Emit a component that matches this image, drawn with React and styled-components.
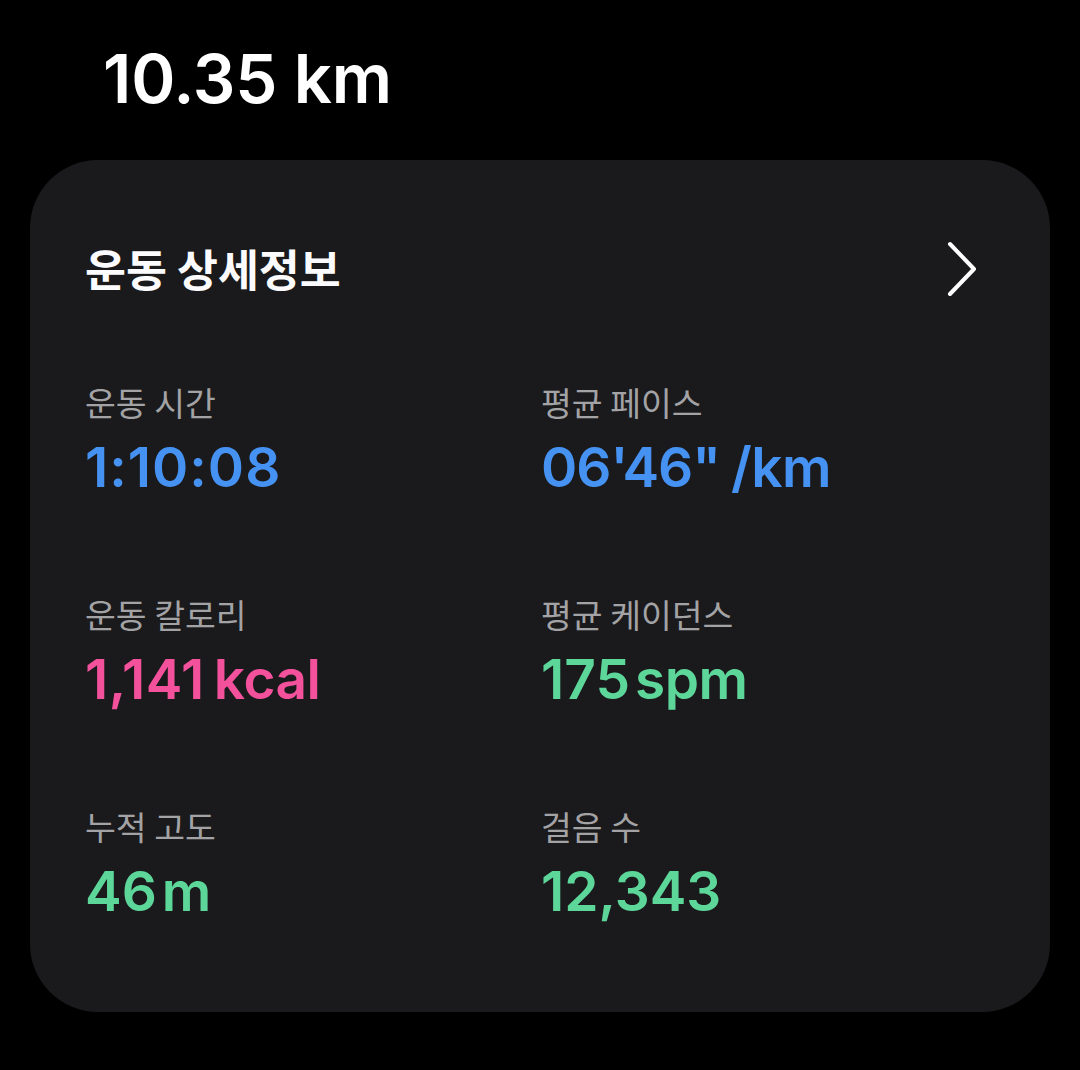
import React from "react";
import styled, { createGlobalStyle } from "styled-components";

const Global = createGlobalStyle`
  html, body { margin: 0; padding: 0; background: #000; }
  body { font-family: Inter, "Noto Sans CJK KR", sans-serif; -webkit-font-smoothing: antialiased; }
`;

const Page = styled.div`
  width: 1080px;
  height: 1070px;
  background: #000;
  display: flex;
  flex-direction: column;
  box-sizing: border-box;
  padding-top: 46px;
  overflow: hidden;
`;

const Distance = styled.div`
  font-family: Inter, sans-serif;
  font-weight: 600;
  font-size: 67px;
  line-height: 66px;
  color: #fff;
  padding-left: 103px;
  letter-spacing: -0.2px;
`;

const Card = styled.section`
  margin: 48px 30px 0 30px;
  height: 852px;
  background: #1a1a1c;
  border-radius: 68px;
  box-sizing: border-box;
  padding: 70px 72px 0 55px;
  display: flex;
  flex-direction: column;
`;

const Header = styled.div`
  height: 80px;
  display: flex;
  align-items: center;
  justify-content: space-between;
`;

const Title = styled.h2`
  margin: 0;
  font-family: "Noto Sans CJK KR", sans-serif;
  font-weight: 700;
  font-size: 44.5px;
  line-height: 56px;
  color: #fbfbfd;
  letter-spacing: 0;
  transform: translateY(-2px);
`;

const Chevron = styled.svg`
  width: 32px;
  height: 58px;
  display: block;
`;

const Grid = styled.div`
  margin-top: 72px;
  display: grid;
  grid-template-columns: 456px 1fr;
  row-gap: 95px;
`;

const Cell = styled.div`
  display: flex;
  flex-direction: column;
  gap: 13px;
`;

const Label = styled.div`
  font-family: "Noto Sans CJK KR", sans-serif;
  font-weight: 400;
  font-size: 33.5px;
  line-height: 40px;
  color: #a3a3a6;
`;

const Value = styled.div`
  font-family: Inter, sans-serif;
  font-weight: 600;
  font-size: 55px;
  line-height: 64px;
  letter-spacing: ${(p) => p.$tracking || 0}px;
  color: ${(p) => p.$color};
`;

const Unit = styled.span`
  margin-left: ${(p) => p.$gap || 4}px;
  letter-spacing: -0.5px;
`;

const Quote = styled.span`
  letter-spacing: ${(p) => p.$tight || 0}px;
`;

const BLUE = "#4592f2";
const PINK = "#f3519b";
const GREEN = "#5dd69a";

const stats = [
  { label: "운동 시간", value: "1:10:08", tracking: 1, color: BLUE },
  {
    label: "평균 페이스",
    value: (
      <>
        06<Quote $tight={-6}>'</Quote>46<Quote>"</Quote>
      </>
    ),
    unit: "/km",
    gap: 10,
    tracking: -1,
    color: BLUE,
  },
  { label: "운동 칼로리", value: "1,141", unit: "kcal", gap: 9, tracking: 0.5, color: PINK },
  { label: "평균 케이던스", value: "175", unit: "spm", gap: 5, color: GREEN },
  { label: "누적 고도", value: "46", unit: "m", gap: 5, color: GREEN },
  { label: "걸음 수", value: "12,343", color: GREEN },
];

export default function App() {
  return (
    <>
      <Global />
      <Page>
        <Distance>10.35 km</Distance>
        <Card>
          <Header>
            <Title>운동 상세정보</Title>
            <Chevron viewBox="0 0 32 58" fill="none">
              <path d="M4 3 L28 28 L4 53" stroke="#fff" strokeWidth="4" strokeLinecap="round" strokeLinejoin="round" />
            </Chevron>
          </Header>
          <Grid>
            {stats.map((s) => (
              <Cell key={s.label}>
                <Label>{s.label}</Label>
                <Value $color={s.color} $tracking={s.tracking}>
                  {s.value}
                  {s.unit && <Unit $gap={s.gap}>{s.unit}</Unit>}
                </Value>
              </Cell>
            ))}
          </Grid>
        </Card>
      </Page>
    </>
  );
}
